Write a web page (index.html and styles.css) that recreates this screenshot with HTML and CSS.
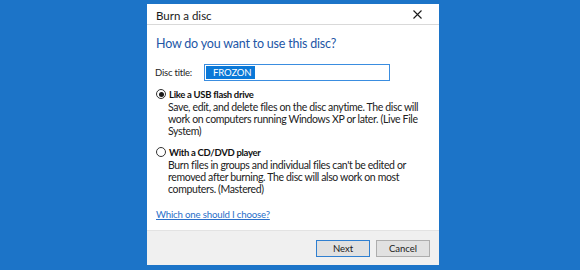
FILE: index.html
```html
<!DOCTYPE html>
<html>
<head>
<meta charset="utf-8">
<link rel="stylesheet" href="styles.css">
</head>
<body>
<div class="dialog">
  <div class="titlebar">
    <span class="title">Burn a disc</span>
    <svg class="close" width="9" height="9" viewBox="0 0 9 9"><path d="M0.5 0.5 L8.5 8.5 M8.5 0.5 L0.5 8.5" stroke="#1a1a1a" stroke-width="1.1" fill="none"/></svg>
  </div>
  <div class="content">
    <div class="heading">How do you want to use this disc?</div>
    <div class="field">
      <span class="label">Disc title:</span>
      <div class="input"><span class="sel">FROZON</span></div>
    </div>
    <div class="option first">
      <div class="opt-head"><span class="radio checked"></span><span class="opt-title">Like a USB flash drive</span></div>
      <div class="desc">Save, edit, and delete files on the disc anytime. The disc will<br>work on computers running Windows XP or later. (Live File<br>System)</div>
    </div>
    <div class="option second">
      <div class="opt-head"><span class="radio"></span><span class="opt-title">With a CD/DVD player</span></div>
      <div class="desc">Burn files in groups and individual files can't be edited or<br>removed after burning. The disc will also work on most<br>computers. (Mastered)</div>
    </div>
    <a class="link" href="#">Which one should I choose?</a>
  </div>
  <div class="footer">
    <button class="btn primary">Next</button>
    <button class="btn">Cancel</button>
  </div>
</div>
</body>
</html>
```

FILE: styles.css
```css
html, body {
  margin: 0;
  padding: 0;
}
body {
  width: 580px;
  height: 270px;
  overflow: hidden;
  background: #1c74c8;
  font-family: "Lato", "Open Sans", sans-serif;
  color: #1e1e1e;
}
.dialog {
  margin: 4px 0 0 147px;
  width: 292px;
  height: 261px;
  background: #ffffff;
  display: flex;
  flex-direction: column;
}
.titlebar {
  height: 20px;
  border-bottom: 1px solid #d9d9d9;
  display: flex;
  align-items: center;
  justify-content: space-between;
  padding: 0 17px 0 9px;
}
.title {
  font-size: 11.5px;
  color: #1a1a1a;
  padding-top: 2px;
}
.close {
  display: block;
  margin-top: 1px;
}
.content {
  flex: 1;
  padding: 0 9px;
  display: flex;
  flex-direction: column;
  align-items: flex-start;
}
.heading {
  margin-top: 11px;
  font-size: 12.5px;
  line-height: 15px;
  letter-spacing: -0.2px;
  color: #2256a6;
}
.field {
  margin-top: 13px;
  display: flex;
  align-items: center;
}
.label {
  width: 49px;
  font-size: 9.5px;
  letter-spacing: -0.2px;
  margin-left: -1px;
}
.input {
  width: 182px;
  height: 13px;
  border: 1px solid #3a8de0;
  display: flex;
  align-items: stretch;
  padding: 1px 1px;
  box-sizing: content-box;
}
.sel {
  background: #0a78d7;
  color: #ffffff;
  font-size: 9.5px;
  line-height: 13px;
  width: 49px;
  padding-left: 7px;
  box-sizing: border-box;
  letter-spacing: -0.1px;
}
.option {
  display: flex;
  flex-direction: column;
}
.option.first {
  margin-top: 7px;
}
.option.second {
  margin-top: 9px;
}
.opt-head {
  display: flex;
  align-items: center;
  height: 12px;
}
.radio {
  width: 8px;
  height: 8px;
  border: 1px solid #333333;
  border-radius: 50%;
  margin-right: 3px;
  display: flex;
  align-items: center;
  justify-content: center;
  flex: none;
}
.radio.checked::after {
  content: "";
  width: 5px;
  height: 5px;
  border-radius: 50%;
  background: #1a1a1a;
}
.opt-title {
  font-size: 9.5px;
  font-weight: 700;
  letter-spacing: -0.3px;
  color: #111;
}
.desc {
  margin-left: 12px;
  margin-top: 1px;
  font-size: 10.5px;
  line-height: 12px;
  letter-spacing: -0.36px;
  color: #222;
  white-space: nowrap;
}
.link {
  margin-top: 13px;
  font-size: 9.7px;
  line-height: 12px;
  letter-spacing: -0.2px;
  color: #2a6fc9;
  text-decoration: underline;
}
.footer {
  height: 34px;
  border-top: 1px solid #e3e3e3;
  background: #f0f0f0;
  display: flex;
  align-items: center;
  justify-content: flex-end;
  gap: 6px;
  padding-right: 9px;
}
.btn {
  width: 54px;
  height: 17px;
  padding: 0;
  margin: 0;
  background: #e1e1e1;
  border: 1px solid #adadad;
  font-family: "Lato", "Open Sans", sans-serif;
  font-size: 9.5px;
  color: #1a1a1a;
}
.btn.primary {
  border-color: #2f7fd0;
}
```
